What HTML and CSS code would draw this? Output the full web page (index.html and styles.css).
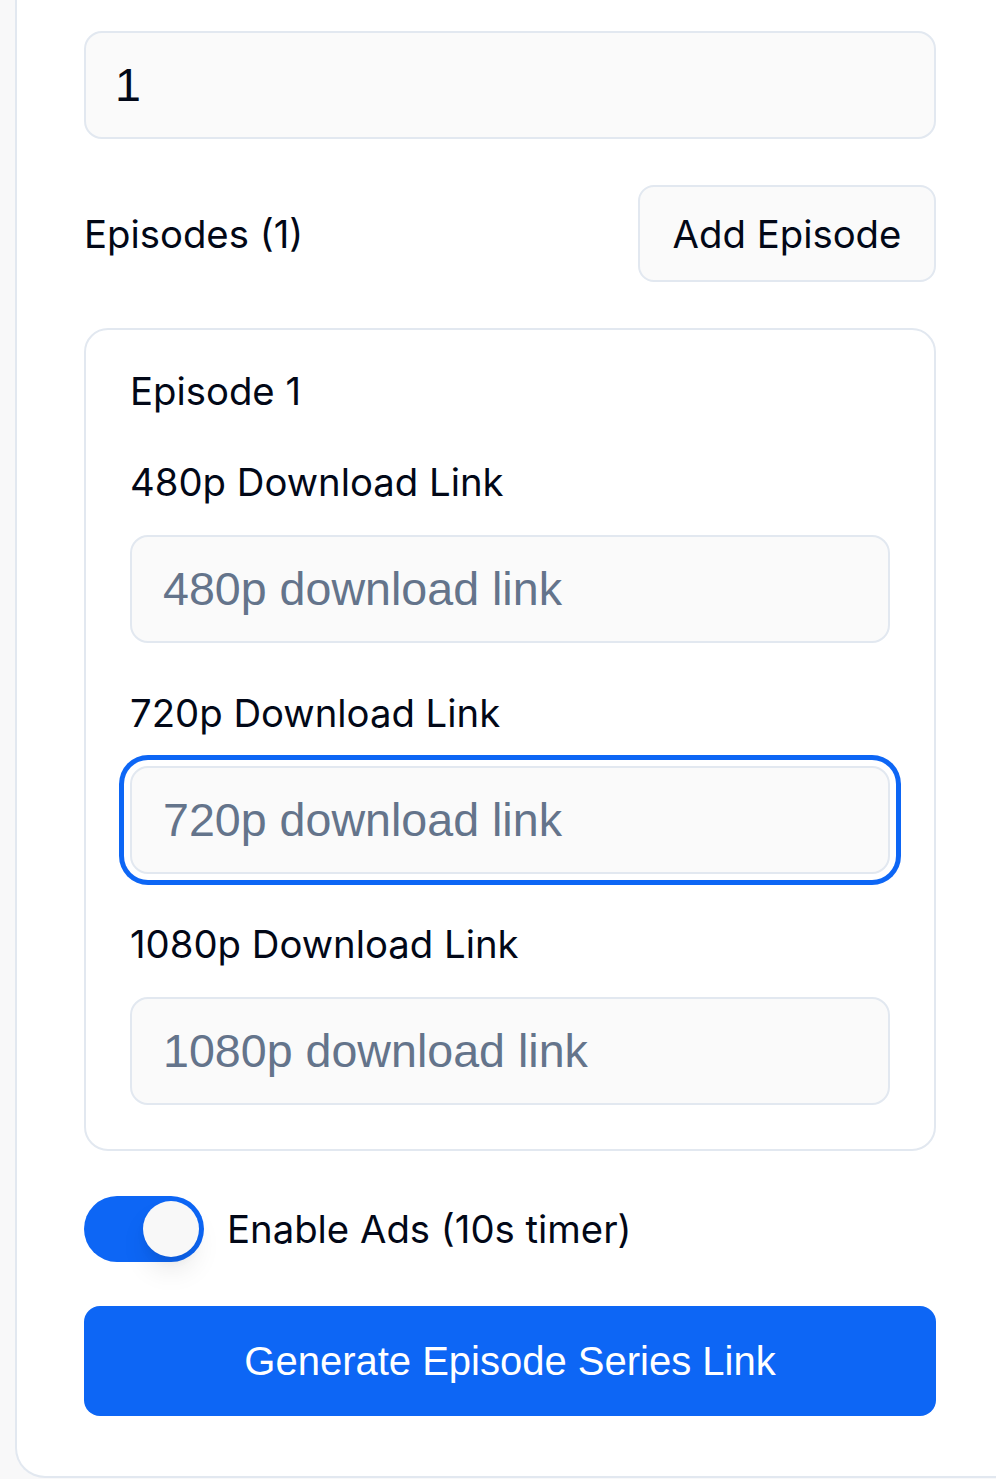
FILE: index.html
```html
<!DOCTYPE html>
<html lang="en">
<head>
<meta charset="utf-8">
<title>Episode Series</title>
<link rel="stylesheet" href="styles.css">
</head>
<body>
<div class="page">
  <div class="card">
    <div class="input input-value">1</div>

    <div class="episodes-head">
      <span class="label">Episodes (1)</span>
      <button class="btn-outline">Add Episode</button>
    </div>

    <div class="episode-box">
      <div class="episode-title">Episode 1</div>

      <div class="field first">
        <div class="label">480p Download Link</div>
        <div class="input placeholder">480p download link</div>
      </div>
      <div class="field">
        <div class="label">720p Download Link</div>
        <div class="input placeholder focused">720p download link</div>
      </div>
      <div class="field">
        <div class="label">1080p Download Link</div>
        <div class="input placeholder">1080p download link</div>
      </div>
    </div>

    <div class="toggle-row">
      <div class="toggle"><span class="knob"></span></div>
      <span class="label">Enable Ads (10s timer)</span>
    </div>

    <button class="btn-primary">Generate Episode Series Link</button>
  </div>
</div>
</body>
</html>
```

FILE: styles.css
```css
* { box-sizing: border-box; }

html, body {
  margin: 0;
  padding: 0;
  background: #f8f8f9;
  overflow: hidden;
}

.page {
  padding-left: 15px;
  width: 996px;
  height: 1479px;
}

.card {
  background: #ffffff;
  border-left: 2px solid #e2e8f0;
  border-bottom: 2px solid #e2e8f0;
  border-bottom-left-radius: 30px;
  padding: 31px 60px 60px 67px;
  display: flex;
  flex-direction: column;
}

.label {
  font-family: Inter, "Liberation Sans", sans-serif;
  font-size: 38.3px;
  color: #020817;
  line-height: 44px;
}

.input {
  height: 108px;
  background: #fafafa;
  border: 2px solid #e2e8f0;
  border-radius: 18px;
  padding: 0 31px;
  display: flex;
  align-items: center;
  font-family: "Liberation Sans", Arial, sans-serif;
  font-size: 46.6px;
  color: #020817;
}

.input-value { padding-left: 29px; }

.input.placeholder { color: #64748b; }

.input.focused {
  box-shadow: 0 0 0 6px #ffffff, 0 0 0 11px #0d66f5;
}

.episodes-head {
  margin-top: 46px;
  display: flex;
  align-items: center;
  justify-content: space-between;
}

.btn-outline {
  height: 97px;
  width: 298px;
  background: #fafafa;
  border: 2px solid #e2e8f0;
  border-radius: 16px;
  font-family: Inter, "Liberation Sans", sans-serif;
  font-size: 38.3px;
  color: #020817;
  padding: 0;
}

.episode-box {
  margin-top: 46px;
  border: 2px solid #e2e8f0;
  border-radius: 24px;
  padding: 44px;
  display: flex;
  flex-direction: column;
}

.episode-title {
  font-family: Inter, "Liberation Sans", sans-serif;
  font-size: 38.3px;
  line-height: 34px;
  color: #020817;
}

.field { margin-top: 48px; display: flex; flex-direction: column; }
.field.first { margin-top: 52px; }
.field .label { margin-bottom: 31px; }

.toggle-row {
  margin-top: 45px;
  display: flex;
  align-items: center;
  gap: 23px;
}

.toggle {
  width: 120px;
  height: 66px;
  border-radius: 33px;
  background: #0d66f5;
  position: relative;
  flex-shrink: 0;
}

.knob {
  position: absolute;
  right: 5px;
  top: 5px;
  width: 56px;
  height: 56px;
  border-radius: 50%;
  background: #f8f8f8;
  box-shadow: 0 16px 30px -6px rgba(0,0,0,0.12), 0 6px 12px -4px rgba(0,0,0,0.08);
}

.btn-primary {
  margin-top: 44px;
  height: 110px;
  width: 100%;
  background: #0d66f5;
  border: none;
  border-radius: 16px;
  font-family: "Liberation Sans", Arial, sans-serif;
  font-size: 40px;
  color: #ffffff;
  padding: 0;
}
```
